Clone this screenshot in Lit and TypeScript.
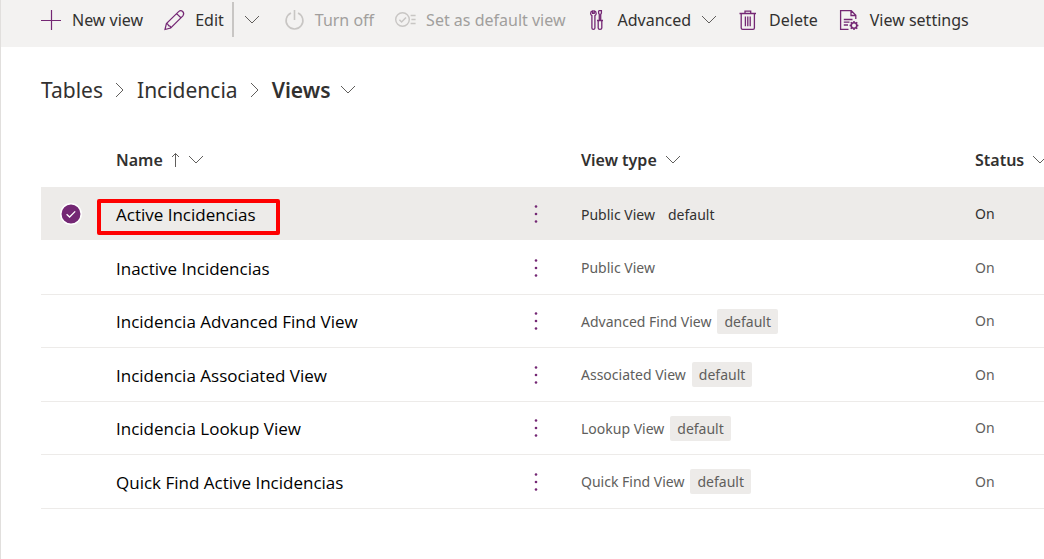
import { LitElement, html, css, svg, nothing } from "lit";
import { customElement, property, state } from "lit/decorators.js";

const icons: Record<string, unknown> = {
  plus: svg`<path d="M10.5 0V20M0 10.5H20" />`,
  pencil: svg`<path d="M1 19.5 2.4 13.6 14.6 1.6Q16.7-.1 18.7 1.5 20.6 3.6 18.9 5.8L6.7 18Z M2.4 13.6Q4 13.4 4.6 15.7 6.9 16.2 6.7 18 M12.6 3.6 16.9 7.8" />`,
  power: svg`<path d="M10.5 0V10M7 3A8.4 8.4 0 1 0 14 3" stroke-width="1.6" />`,
  setDefault: svg`<circle cx="7.5" cy="9.5" r="6.8" stroke-width="1.4" /><path d="M4.4 9.8 6.6 12 11 7.4M15.6 5.5H20.6M16.4 9.5H20.6M15.6 13.5H20.6" stroke-width="1.5" />`,
  tools: svg`<path d="M5.6 .9Q3.6 1.4 3.6 3.4 3.6 4.8 4.9 5.6V18Q4.9 19.4 6.4 19.4 7.9 19.4 7.9 18V5.6Q9.2 4.8 9.2 3.4 9.2 1.4 7.2 .9V3.4H5.6ZM11.6 .7H14.4V3L13.7 4.4V10M12.3 10V4.4L11.6 3V.7M10 10.5H16M11.2 10.5V18Q11.2 19.4 13 19.4 14.8 19.4 14.8 18V10.5" stroke-width="1.3" />`,
  trash: svg`<path d="M1.5 3.5H18M7 3.2V1.1H12.7V3.2M3.2 3.5V18Q3.2 19.4 4.7 19.4H15Q16.4 19.4 16.4 18V3.5M7.4 6.5V16.2M9.8 6.5V16.2M12.2 6.5V16.2" stroke-width="1.3" />`,
  settings: svg`<path d="M9.5 19.4H1.6V.7H12.3L16.8 5.2V9M12 .9V5.5H16.8M4.8 9.5H13.5M4.8 12.2H10.5M4.8 15H9" stroke-width="1.3" /><circle cx="15" cy="15.5" r="2.8" stroke-width="1.6" /><path d="M15 11V12.4M15 18.6V20M10.6 15.5H12M18 15.5H19.4M11.8 12.3 12.9 13.4M17.1 17.6 18.2 18.7M18.2 12.3 17.1 13.4M12.9 17.6 11.8 18.7" stroke-width="1.5" />`,
};

interface ViewRow {
  name: string;
  type: string;
  isDefault: boolean;
}

const rows: ViewRow[] = [
  { name: "Active Incidencias", type: "Public View", isDefault: true },
  { name: "Inactive Incidencias", type: "Public View", isDefault: false },
  { name: "Incidencia Advanced Find View", type: "Advanced Find View", isDefault: true },
  { name: "Incidencia Associated View", type: "Associated View", isDefault: true },
  { name: "Incidencia Lookup View", type: "Lookup View", isDefault: true },
  { name: "Quick Find Active Incidencias", type: "Quick Find View", isDefault: true },
];

const chevronDown = html`<svg class="chevron" viewBox="0 0 16 10" width="16" height="10" aria-hidden="true">
  <path d="M1 1 8 8 15 1" fill="none" stroke="currentColor" />
</svg>`;

const chevronRight = html`<svg viewBox="0 0 10 16" width="10" height="16" aria-hidden="true">
  <path d="M1 1 8 8 1 15" fill="none" stroke="currentColor" />
</svg>`;

@customElement("command-button")
class CommandButton extends LitElement {
  @property() icon = "";
  @property() label = "";
  @property({ type: Boolean }) disabled = false;
  @property({ type: Boolean }) menu = false;

  static styles = css`
    :host { display: block; flex: none; }
    button {
      display: flex;
      align-items: center;
      gap: 10px;
      height: 40px;
      padding: 0;
      border: 0;
      background: none;
      color: #323130;
      font: 16px/24px "Noto Sans", "Open Sans", sans-serif;
      white-space: nowrap;
      cursor: pointer;
    }
    button:disabled { color: #a19f9d; cursor: default; }
    .icon { color: #742774; overflow: visible; }
    button:disabled .icon { color: #c8c6c4; }
    .chevron { color: #605e5c; }
  `;

  render() {
    return html`<button type="button" ?disabled=${this.disabled}>
      <svg class="icon" viewBox="0 0 21 20" width="21" height="20" fill="none" stroke="currentColor" stroke-width="1.2" aria-hidden="true">${icons[this.icon]}</svg>
      <span>${this.label}</span>
      ${this.menu ? chevronDown : nothing}
    </button>`;
  }
}

@customElement("app-root")
class AppRoot extends LitElement {
  @state() private selected = 0;

  static styles = css`
    :host {
      display: block;
      box-sizing: border-box;
      min-height: 100vh;
      overflow: hidden;
      border-left: 1px solid #e1dfdd;
      background: #fff;
      color: #323130;
      font-family: "Noto Sans", "Open Sans", sans-serif;
      font-size: 16px;
      line-height: 24px;
    }
    button { padding: 0; border: 0; background: none; font: inherit; color: inherit; cursor: pointer; }
    .bar {
      display: flex;
      align-items: flex-start;
      gap: 21px;
      height: 47px;
      padding-left: 40px;
      background: #f3f2f1;
    }
    .split { display: flex; gap: 8px; }
    .split-menu {
      display: flex;
      align-items: center;
      justify-content: center;
      height: 35px;
      margin-top: 2px;
      padding: 0 3px 0 10px;
      border-left: 2px solid #c8c6c4;
      color: #605e5c;
    }
    .crumbs {
      display: flex;
      align-items: center;
      gap: 12px;
      margin: 0;
      padding: 27px 0 0 40px;
      list-style: none;
      font-size: 21px;
      line-height: 32px;
    }
    .crumbs li { display: flex; align-items: center; gap: 12px; }
    .crumbs svg { color: #605e5c; }
    .crumbs a { color: inherit; text-decoration: none; }
    .crumbs button { display: flex; align-items: center; gap: 10px; font-weight: 600; }
    .list { padding: 27px 0 0 40px; }
    table { width: 100%; table-layout: fixed; border-collapse: separate; border-spacing: 0; }
    th, td { box-sizing: border-box; padding: 0; text-align: left; white-space: nowrap; vertical-align: middle; }
    th { height: 55px; border-bottom: 1px solid #edebe9; font-weight: 600; }
    th button { display: flex; align-items: center; gap: 8px; }
    th svg { color: #605e5c; flex: none; }
    .col-check { width: 75px; }
    .col-more { width: 71px; }
    .col-status { width: 69px; }
    td { height: 53px; border-bottom: 1px solid #edebe9; color: #605e5c; font-size: 14px; }
    tr:nth-child(even) td { height: 54px; }
    td.name { padding-top: 2px; color: #000; font-family: "Open Sans", "Noto Sans", sans-serif; font-size: 17px; }
    .name a { color: inherit; text-decoration: none; }
    .selected td { background: #edebe9; background-clip: padding-box; border-bottom-color: #fff; color: #323130; }
    .selected .name { color: #000; }
    .check { display: block; margin-left: 19px; }
    .marked { position: relative; }
    .marked::after {
      content: "";
      position: absolute;
      inset: -4px -24px -9px -19px;
      border: 4px solid #fe0000;
      border-radius: 2px;
      pointer-events: none;
    }
    .more { display: flex; align-items: center; justify-content: center; width: 52px; height: 32px; color: #742774; }
    .type { display: flex; align-items: baseline; gap: 6px; }
    .tag { padding: 0 7px; border-radius: 2px; background: #edebe9; line-height: 25px; }
  `;

  private heading(label: string, sorted = false) {
    return html`<button type="button">
      <span>${label}</span>
      ${sorted
        ? html`<svg viewBox="0 0 9 16" width="9" height="16" aria-hidden="true"><path d="M4.5 15V1.5M1 5 4.5 1.5 8 5" fill="none" stroke="currentColor" /></svg>`
        : nothing}
      ${chevronDown}
    </button>`;
  }

  private row(r: ViewRow, i: number) {
    const on = i === this.selected;
    return html`<tr class=${on ? "selected" : ""} aria-selected=${on} @click=${() => (this.selected = i)}>
      <td>
        ${on
          ? html`<svg class="check" viewBox="0 0 22 22" width="22" height="22" role="img" aria-label="Selected">
              <circle cx="11" cy="11" r="10.2" fill="#742774" stroke="#fff" stroke-width="1.5" />
              <path d="M6.6 11.2 9.6 14 15.2 8.4" fill="none" stroke="#fff" stroke-width="1.3" />
            </svg>`
          : nothing}
      </td>
      <td class="name"><a class=${i === 0 ? "marked" : ""} href="#view-${i}">${r.name}</a></td>
      <td>
        <button class="more" type="button" aria-label="More commands for ${r.name}">
          <svg viewBox="0 0 4 18" width="4" height="18" fill="currentColor" aria-hidden="true">
            <circle cx="2" cy="1.5" r="1.3" /><circle cx="2" cy="9" r="1.3" /><circle cx="2" cy="16.5" r="1.3" />
          </svg>
        </button>
      </td>
      <td><div class="type"><span>${r.type}</span>${r.isDefault ? html`<span class="tag">default</span>` : nothing}</div></td>
      <td>On</td>
    </tr>`;
  }

  render() {
    return html`
      <div class="bar" role="toolbar" aria-label="Commands">
        <command-button icon="plus" label="New view"></command-button>
        <div class="split">
          <command-button icon="pencil" label="Edit"></command-button>
          <button class="split-menu" type="button" aria-label="More edit options">${chevronDown}</button>
        </div>
        <command-button icon="power" label="Turn off" disabled></command-button>
        <command-button icon="setDefault" label="Set as default view" disabled></command-button>
        <command-button icon="tools" label="Advanced" menu></command-button>
        <command-button icon="trash" label="Delete"></command-button>
        <command-button icon="settings" label="View settings"></command-button>
      </div>
      <nav aria-label="Breadcrumb">
        <ol class="crumbs">
          <li><a href="#tables">Tables</a>${chevronRight}</li>
          <li><a href="#incidencia">Incidencia</a>${chevronRight}</li>
          <li><button type="button">Views ${chevronDown}</button></li>
        </ol>
      </nav>
      <main class="list">
        <table>
          <thead>
            <tr>
              <th class="col-check"></th>
              <th aria-sort="ascending">${this.heading("Name", true)}</th>
              <th class="col-more"></th>
              <th>${this.heading("View type")}</th>
              <th class="col-status">${this.heading("Status")}</th>
            </tr>
          </thead>
          <tbody>${rows.map((r, i) => this.row(r, i))}</tbody>
        </table>
      </main>
    `;
  }
}
